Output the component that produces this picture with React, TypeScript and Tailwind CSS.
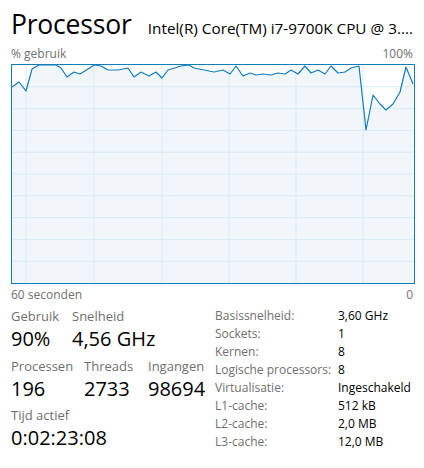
const points: [number, number][] = [
  [11, 86], [18, 81], [25, 90], [31, 68], [38, 64], [55, 64], [60, 67], [66, 76], [73, 71], [79, 73],
  [87, 68], [93, 64], [100, 65], [107, 69], [117, 69], [127, 67], [133, 76], [140, 71], [148, 75],
  [155, 71], [161, 77], [167, 69], [180, 65], [188, 64], [193, 67], [213, 71], [222, 69], [229, 73],
  [235, 65], [242, 75], [249, 72], [255, 74], [262, 73], [270, 74], [277, 72], [284, 73], [290, 69],
  [297, 73], [304, 65], [310, 72], [317, 69], [324, 73], [330, 65], [337, 72], [344, 71], [350, 67],
  [358, 65], [365, 129], [372, 94], [379, 103], [385, 109], [392, 103], [399, 91], [405, 66], [412, 83],
];

const left = 11;
const top = 64;
const w = 402;
const h = 218;

function CpuChart() {
  const pts = points.map(([x, y]) => [x - left, y - top]);
  const line = pts.map(([x, y]) => `${x},${y}`).join(" ");
  const area = `0,${h} ${line} ${w},${h}`;
  const rows = Array.from({ length: 9 }, (_, i) => ((i + 1) * h) / 10);
  const cols = [14, 82, 150, 217, 284, 351];

  return (
    <svg width={w} height={h} className="block border border-[#117dbb] box-content">
      <rect x={0} y={0} width={w} height={h} fill="#ffffff" />
      <polygon points={area} fill="#f1f6fa" />
      {rows.map((y) => (
        <line key={y} x1={0} x2={w} y1={y} y2={y} stroke="#d9eaf4" strokeWidth={1} />
      ))}
      {cols.map((x) => (
        <line key={x} x1={x} x2={x} y1={0} y2={h} stroke="#d9eaf4" strokeWidth={1} />
      ))}
      <polyline points={line} fill="none" stroke="#117dbb" strokeWidth={1.2} strokeLinejoin="round" />
    </svg>
  );
}

const specs = [
  ["Basissnelheid:", "3,60 GHz"],
  ["Sockets:", "1"],
  ["Kernen:", "8"],
  ["Logische processors:", "8"],
  ["Virtualisatie:", "Ingeschakeld"],
  ["L1-cache:", "512 kB"],
  ["L2-cache:", "2,0 MB"],
  ["L3-cache:", "12,0 MB"],
];

function Stat({ label, value, className }: { label: string; value: string; className?: string }) {
  return (
    <div className={className}>
      <div className="text-[13px] leading-[18px] text-[#707070]">{label}</div>
      <div className="text-[20px] leading-[27px] text-black">{value}</div>
    </div>
  );
}

export default function App() {
  return (
    <div
      className="w-[424px] h-[468px] bg-white overflow-hidden px-[11px]"
      style={{ fontFamily: '"Open Sans", "Noto Sans", sans-serif' }}
    >
      <div className="flex items-baseline justify-between pt-[6px] h-[44px]">
        <span className="text-[26.5px] leading-[36px] text-black tracking-[-0.2px]">Processor</span>
        <span className="text-[15.3px] leading-[20px] text-black whitespace-nowrap">Intel(R) Core(TM) i7-9700K CPU @ 3....</span>
      </div>
      <div className="flex justify-between text-[12px] leading-[16px] text-[#707070] mt-[2px] h-[18px]">
        <span>% gebruik</span>
        <span>100%</span>
      </div>
      <CpuChart />
      <div className="flex justify-between text-[12px] leading-[16px] text-[#707070] mt-[3px]">
        <span>60 seconden</span>
        <span>0</span>
      </div>

      <div className="flex mt-[4px]">
        <div className="w-[204px] shrink-0">
          <div className="flex">
            <Stat label="Gebruik" value="90%" className="w-[61px]" />
            <Stat label="Snelheid" value="4,56 GHz" />
          </div>
          <div className="flex mt-[5px]">
            <Stat label="Processen" value="196" className="w-[73px]" />
            <Stat label="Threads" value="2733" className="w-[64px]" />
            <Stat label="Ingangen" value="98694" />
          </div>
          <Stat label="Tijd actief" value="0:02:23:08" className="mt-[4px]" />
        </div>
        <div className="flex flex-col text-[12px] leading-[18px]">
          {specs.map(([k, v]) => (
            <div key={k} className="flex">
              <span className="w-[123px] text-[#707070] whitespace-nowrap">{k}</span>
              <span className="text-black">{v}</span>
            </div>
          ))}
        </div>
      </div>
    </div>
  );
}
